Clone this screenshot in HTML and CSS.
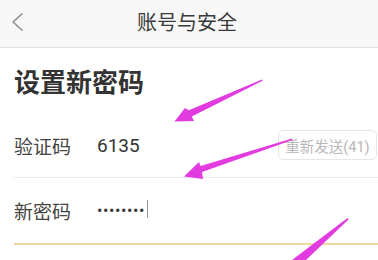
FILE: index.html
```html
<!DOCTYPE html>
<html lang="zh">
<head>
<meta charset="utf-8">
<link rel="stylesheet" href="styles.css">
</head>
<body>
<div class="screen">
  <header class="topbar">
    <svg class="back" width="14" height="20" viewBox="0 0 14 20"><polyline points="11.5,1.5 2,10 11.5,18.5" fill="none" stroke="#8a8a8a" stroke-width="1.4"/></svg>
    <h1 class="topbar-title">账号与安全</h1>
  </header>
  <h2 class="page-title">设置新密码</h2>
  <div class="form">
    <div class="row row-code">
      <span class="label">验证码</span>
      <span class="value">6135</span>
      <span class="resend">重新发送(41)</span>
    </div>
    <div class="row row-pwd">
      <span class="label">新密码</span>
      <span class="value dots">••••••••</span><span class="cursor"></span>
    </div>
  </div>
  <svg class="arrows" width="378" height="260" viewBox="0 0 378 260">
    <polygon fill="#e23be0" points="262,79.5 263,80.5 191.8,116.6 194,121 174.5,121.5 185,108 188.8,110.2"/>
    <polygon fill="#e23be0" points="292,138.5 292.5,140 202,172 203,179 184,176.5 199,162 200.5,166"/>
    <polygon fill="#e23be0" points="347.5,218 348.5,219.5 306,260 292,260"/>
  </svg>
</div>
</body>
</html>
```
FILE: styles.css
```css
html, body {
  margin: 0;
  padding: 0;
  background: #ffffff;
}
.screen {
  position: relative;
  width: 378px;
  height: 260px;
  overflow: hidden;
  font-family: Roboto, "Noto Sans CJK SC", sans-serif;
  color: #333333;
}
.topbar {
  height: 47px;
  background: #f7f7f7;
  border-bottom: 1px solid #e2e2e2;
  display: flex;
  align-items: center;
  justify-content: center;
  position: relative;
}
.back {
  position: absolute;
  left: 11px;
  top: 12px;
}
.topbar-title {
  margin: 0 0 0 -4px;
  font-size: 20px;
  font-weight: 400;
  color: #3a3a3a;
  line-height: 47px;
}
.page-title {
  margin: 17px 0 0 14px;
  font-size: 26px;
  font-weight: 700;
  line-height: 36px;
  color: #333333;
}
.form {
  margin-top: 12px;
  padding-left: 14px;
}
.row {
  display: flex;
  align-items: center;
  padding-right: 1px;
}
.row-code {
  height: 64px;
  border-bottom: 1px solid #ececec;
}
.row-pwd {
  height: 65px;
  border-bottom: 2px solid #f0d79e;
}
.label {
  width: 83px;
  font-size: 19px;
  color: #444444;
}
.value {
  font-size: 19px;
  color: #333333;
}
.dots {
  font-size: 16px;
  letter-spacing: 0.6px;
  color: #333333;
}
.cursor {
  width: 1px;
  height: 18px;
  background: #9a9a9a;
  margin-left: 2px;
  margin-top: -3px;
}
.resend {
  margin-left: auto;
  box-sizing: border-box;
  width: 99px;
  height: 30px;
  border: 1px solid #e6e6e6;
  border-radius: 5px;
  font-size: 14.5px;
  color: #b8b8b8;
  display: flex;
  align-items: center;
  justify-content: center;
}
.arrows {
  position: absolute;
  left: 0;
  top: 0;
  pointer-events: none;
}
```
